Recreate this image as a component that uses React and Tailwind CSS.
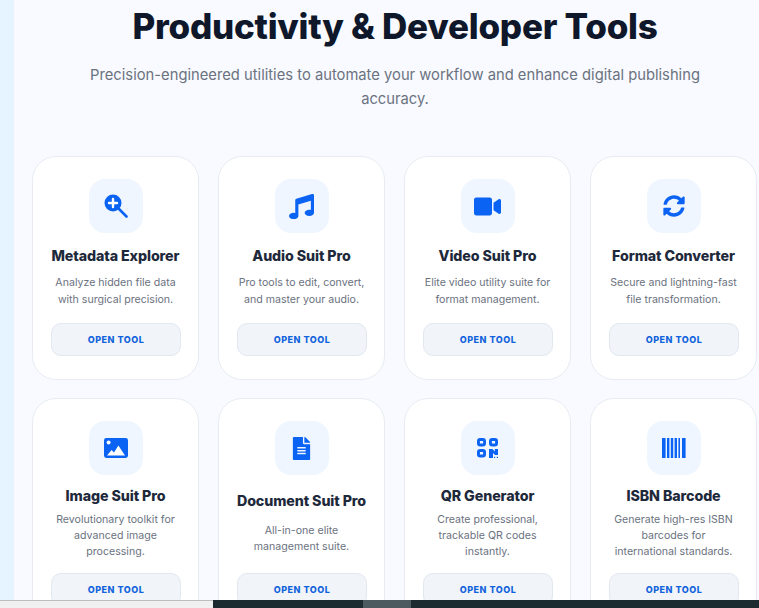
import { FaMusic, FaVideo, FaSyncAlt, FaFileAlt } from 'react-icons/fa'

function ZoomIcon() {
  return (
    <svg viewBox="0 0 24 24" className="w-[24px] h-[24px]">
      <line x1="15" y1="15" x2="22.5" y2="22.5" stroke="currentColor" strokeWidth="2.6" strokeLinecap="round" />
      <circle cx="9" cy="9" r="8.5" fill="currentColor" />
      <path d="M9 5v8M5 9h8" stroke="#fff" strokeWidth="2.4" strokeLinecap="round" />
    </svg>
  )
}

function ImageIcon() {
  return (
    <svg viewBox="0 0 24 20" className="w-[24px] h-[20px]">
      <rect width="24" height="20" rx="2.4" fill="currentColor" />
      <circle cx="4.6" cy="4.4" r="2" fill="#fff" />
      <path d="M3 17.5l4.6-5.4 2.4 2.4 4.4-7 6.6 10z" fill="#fff" />
    </svg>
  )
}

function QrIcon() {
  return (
    <svg viewBox="0 0 21 20" className="w-[21px] h-[20px]">
      <g fill="none" stroke="currentColor" strokeWidth="2.9">
        <rect x="1.45" y="1.45" width="6.1" height="5.6" rx="1.8" />
        <rect x="13.45" y="1.45" width="6.1" height="5.6" rx="1.8" />
        <rect x="1.45" y="12.45" width="6.1" height="5.6" rx="1.8" />
      </g>
      <path d="M12 11h3.4l2.4 2.4V11H21v6h-3l-2-2v5h-4z" fill="currentColor" />
      <rect x="17" y="18.8" width="1.2" height="1.2" fill="currentColor" />
      <rect x="19.8" y="18.8" width="1.2" height="1.2" fill="currentColor" />
    </svg>
  )
}

function BarcodeIcon() {
  return (
    <svg viewBox="0 0 24 20" className="w-[24px] h-[20px]" fill="currentColor">
      <rect x="0" y="0" width="3.6" height="20" rx="0.3" />
      <rect x="5" y="0" width="2.4" height="20" />
      <rect x="8.8" y="0" width="2.4" height="20" />
      <rect x="12.6" y="0" width="2.4" height="20" />
      <rect x="16.4" y="0" width="1.6" height="20" />
      <rect x="20" y="0" width="3.6" height="20" rx="0.3" />
    </svg>
  )
}

const rowOne = [
  { title: 'Metadata Explorer', lines: ['Analyze hidden file data', 'with surgical precision.'], icon: <ZoomIcon /> },
  { title: 'Audio Suit Pro', lines: ['Pro tools to edit, convert,', 'and master your audio.'], icon: <FaMusic className="text-[25px]" /> },
  { title: 'Video Suit Pro', lines: ['Elite video utility suite for', 'format management.'], icon: <FaVideo className="text-[27px]" /> },
  { title: 'Format Converter', lines: ['Secure and lightning-fast', 'file transformation.'], icon: <FaSyncAlt className="text-[22px]" /> },
]

const rowTwo = [
  { title: 'Image Suit Pro', lines: ['Revolutionary toolkit for', 'advanced image', 'processing.'], icon: <ImageIcon /> },
  { title: 'Document Suit Pro', lines: ['All-in-one elite', 'management suite.'], icon: <FaFileAlt className="text-[23px]" />, short: true },
  { title: 'QR Generator', lines: ['Create professional,', 'trackable QR codes', 'instantly.'], icon: <QrIcon /> },
  { title: 'ISBN Barcode', lines: ['Generate high-res ISBN', 'barcodes for', 'international standards.'], icon: <BarcodeIcon /> },
]

function ToolCard({ tool, second }) {
  let titleClass = 'mt-[13px]'
  let descClass = 'mt-[8px] leading-[17px]'
  if (second) {
    titleClass = tool.short ? 'mt-[16px]' : 'mt-[11px]'
    descClass = tool.short ? 'mt-[12px] leading-[16px]' : 'mt-[6px] leading-[16px]'
  }

  return (
    <div className="bg-white border border-[#e8ecf2] rounded-[24px] px-[18px] pt-[22px] pb-[23px] flex flex-col items-center text-center">
      <div className="w-[54px] h-[54px] rounded-[16px] bg-[#eff6ff] text-[#0b63f3] flex items-center justify-center shrink-0">
        {tool.icon}
      </div>
      <h3 className={`${titleClass} text-[14.25px] leading-[20px] font-extrabold text-[#1e293b] whitespace-nowrap tracking-[-0.1px]`}>{tool.title}</h3>
      <p className={`${descClass} text-[10.6px] text-[#6b7280] whitespace-nowrap`}>
        {tool.lines.map(line => (
          <span key={line} className="block">{line}</span>
        ))}
      </p>
      <div className="flex-1" />
      <button className={`${second ? 'mt-[13px]' : 'mt-[15px]'} w-[130px] h-[33px] shrink-0 bg-[#f1f5f9] border border-[#e2e8f0] rounded-[10px] pl-[1px] text-[9px] font-extrabold tracking-[0.5px] text-[#1163dc]`}>
        OPEN TOOL
      </button>
    </div>
  )
}

export default function App() {
  return (
    <div className="h-[608px] w-[759px] overflow-hidden flex flex-col font-['Inter',sans-serif]">
      <div className="flex-1 min-h-0 flex overflow-hidden">
        <div className="w-[14px] shrink-0 bg-[#e6f4ff]" />
        <main className="flex-1 min-w-0 bg-[#f8faff] pl-[18px]">
          <div className="w-[726px]">
            <h1 className="pt-[4px] text-[35px] leading-[44px] font-extrabold tracking-[-0.25px] text-[#0f172a] text-center whitespace-nowrap">
              Productivity &amp; Developer Tools
            </h1>
            <p className="mt-[15px] text-[14.75px] leading-[24px] text-[#6b7280] text-center">
              <span className="block">Precision-engineered utilities to automate your workflow and enhance digital publishing</span>
              <span className="block">accuracy.</span>
            </p>
            <div className="mt-[45px] grid grid-cols-[repeat(4,167px)] gap-x-[19px] gap-y-[18px]">
              {rowOne.map(tool => <ToolCard key={tool.title} tool={tool} />)}
              {rowTwo.map(tool => <ToolCard key={tool.title} tool={tool} second />)}
            </div>
          </div>
        </main>
      </div>
      <div className="h-[8px] shrink-0 flex">
        <div className="w-[213px] bg-[#f0f0f0] border-t border-[#bdbdbd]" />
        <div className="w-[150px] bg-[#1c2b30]" />
        <div className="w-[48px] bg-[#4c5b5f]" />
        <div className="flex-1 bg-[#1c2b30]" />
      </div>
    </div>
  )
}
